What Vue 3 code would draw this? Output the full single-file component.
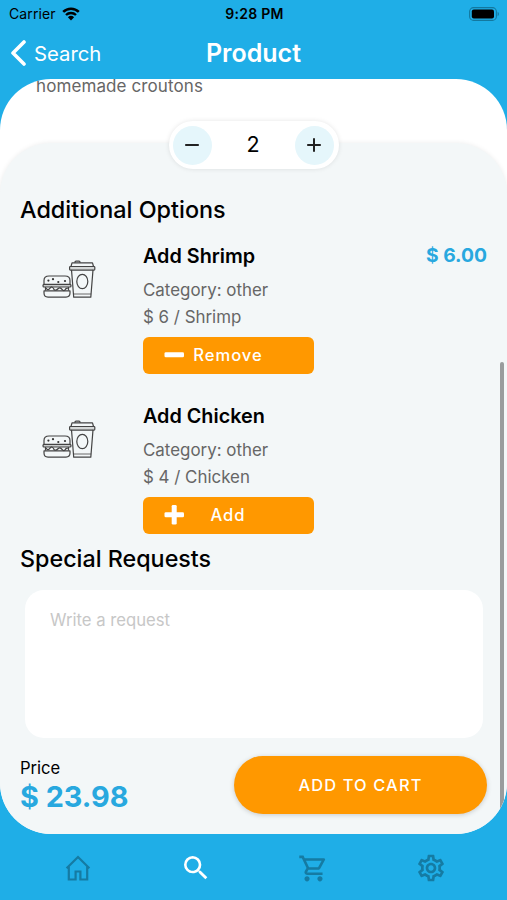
<script setup>
import { ref, computed } from "vue";

const quantity = ref(2);
const request = ref("");
const basePrice = 8.99;

const options = ref([
  { name: "Shrimp", category: "other", price: 6, selected: true },
  { name: "Chicken", category: "other", price: 4, selected: false },
]);

const total = computed(() => {
  const extras = options.value
    .filter((option) => option.selected)
    .reduce((sum, option) => sum + option.price, 0);
  return (basePrice * quantity.value + extras).toFixed(2);
});

const decrease = () => {
  if (quantity.value > 1) quantity.value--;
};

const toggle = (option) => {
  option.selected = !option.selected;
};
</script>

<template>
  <div class="screen">
    <div class="statusBar">
      <div class="carrier">
        <span>Carrier</span>
        <svg width="18" height="14" viewBox="0 0 18 14">
          <path d="M1.2 4.9a11.2 11.2 0 0 1 15.6 0" fill="none" stroke="#000" stroke-width="2.6" />
          <path d="M4 8a7.3 7.3 0 0 1 10 0" fill="none" stroke="#000" stroke-width="2.4" />
          <path d="M9 13.4 5.9 10.2a4.5 4.5 0 0 1 6.2 0z" />
        </svg>
      </div>
      <span class="time">9:28 PM</span>
      <svg class="battery" width="31" height="14" viewBox="0 0 31 14">
        <rect x="0.6" y="0.6" width="26.8" height="12.8" rx="4" fill="none" stroke="#13789f" stroke-width="1.1" />
        <rect x="2.8" y="2.6" width="22.2" height="8.8" rx="2" />
        <path d="M28.6 4.8c1.8.8 1.8 3.6 0 4.4z" fill="#13789f" />
      </svg>
    </div>

    <header class="navBar">
      <button class="backBtn">
        <svg width="16" height="26" viewBox="0 0 16 26">
          <path d="M14 2 3 13l11 11" fill="none" stroke="#fff" stroke-width="3.6" stroke-linecap="round" stroke-linejoin="round" />
        </svg>
        <span>Search</span>
      </button>
      <h1>Product</h1>
    </header>

    <main class="card">
      <p class="description">homemade croutons</p>

      <section class="panel">
        <div class="stepper">
          <button aria-label="Decrease" @click="decrease">
            <svg width="14" height="14" viewBox="0 0 14 14">
              <path d="M.2 7h13.6" stroke="#222" stroke-width="2" />
            </svg>
          </button>
          <span>{{ quantity }}</span>
          <button aria-label="Increase" @click="quantity++">
            <svg width="14" height="14" viewBox="0 0 14 14">
              <path d="M.2 7h13.6M7 .2v13.6" stroke="#222" stroke-width="2" />
            </svg>
          </button>
        </div>

        <h2>Additional Options</h2>
        <div v-for="option in options" :key="option.name" class="option">
          <svg class="thumb" width="54" height="38" viewBox="0 0 54 38">
            <g fill="none" stroke="#444" stroke-width="1.2" stroke-linejoin="round">
              <path d="M2 24v-3.5q0-4.5 5-4.5h16q5 0 5 4.5V24" />
              <rect x="1" y="24.4" width="28" height="2.6" rx="1" fill="#c9cccc" />
              <path d="M3.5 27v3.4M26.5 27v3.4" />
              <path d="M2 30.9h26v2.2q0 4-4 4H6q-4 0-4-4z" />
              <path d="M33 2.8V2q0-.9 1-.9h3q1 0 1 .9v.8" />
              <path d="M29 6.5 30 2.8h20.5l1 3.7" />
              <rect x="27.6" y="6.5" width="25.2" height="3.6" rx=".8" fill="#d5d8d8" />
              <path d="m29.5 9.9 2.2 27.3h17.1L51 9.9" />
              <path d="M31.4 34h17.7" stroke-width=".8" />
              <ellipse cx="40.3" cy="21.5" rx="5.5" ry="7.2" />
            </g>
            <path d="M4 28.2q2 3 4 0t4 1.2q2 1.6 4-.6t4 .6 4-.8l2-.6" fill="none" stroke="#444" stroke-width="1.3" />
            <g fill="#333">
              <circle cx="6.4" cy="20.6" r="1.1" />
              <circle cx="11" cy="19.2" r="1.1" />
              <circle cx="16.3" cy="22" r="1.1" />
              <circle cx="23" cy="21" r="1.1" />
            </g>
          </svg>
          <div class="details">
            <h3>Add {{ option.name }}</h3>
            <p>Category: {{ option.category }}</p>
            <p>$ {{ option.price }} / {{ option.name }}</p>
            <button class="toggleBtn" @click="toggle(option)">
              <svg width="20" height="20" viewBox="0 0 20 20" fill="#fff">
                <rect x="0.5" y="7.3" width="19.5" height="5" rx="1.3" />
                <rect v-if="!option.selected" x="7.7" y="0" width="5" height="19.5" rx="1.3" />
              </svg>
              <span>{{ option.selected ? "Remove" : "Add" }}</span>
            </button>
          </div>
          <span v-if="option.selected" class="optionPrice">$ {{ option.price.toFixed(2) }}</span>
        </div>

        <h2 class="requestTitle">Special Requests</h2>
        <textarea v-model="request" placeholder="Write a request"></textarea>

        <div class="checkout">
          <div>
            <p class="priceLabel">Price</p>
            <p class="total">$ {{ total }}</p>
          </div>
          <button class="cartBtn">ADD TO CART</button>
        </div>
      </section>
      <div class="scrollThumb"></div>
    </main>

    <nav class="tabBar">
      <button aria-label="Home">
        <svg width="28" height="28" viewBox="0 0 28 28">
          <path d="M2.6 14.2 14 3l11.4 11.2M4.8 12.3v13.2h6.8v-8h4.8v8h6.8V12.3" />
        </svg>
      </button>
      <button class="active" aria-label="Search">
        <svg width="32" height="32" viewBox="0 0 24 24">
          <path d="M15.5 14h-.79l-.28-.27A6.47 6.47 0 0 0 16 9.5 6.5 6.5 0 1 0 9.5 16c1.61 0 3.09-.59 4.23-1.57l.27.28v.79l5 4.99L20.49 19l-4.99-5zm-6 0C7.01 14 5 11.99 5 9.5S7.01 5 9.5 5 14 7.01 14 9.5 11.99 14 9.5 14z" />
        </svg>
      </button>
      <button class="filled" aria-label="Cart">
        <svg width="31" height="31" viewBox="0 0 24 24">
          <path d="M15.55 13c.75 0 1.41-.41 1.75-1.03l3.58-6.49A.996.996 0 0 0 20.01 4H5.21l-.94-2H1v2h2l3.6 7.59-1.35 2.44C4.52 15.37 5.48 17 7 17h12v-2H7l1.1-2h7.45zM6.16 6h12.15l-2.76 5H8.53L6.16 6zM7 18c-1.1 0-1.99.9-1.99 2S5.9 22 7 22s2-.9 2-2-.9-2-2-2zm10 0c-1.1 0-1.99.9-1.99 2s.89 2 1.99 2 2-.9 2-2-.9-2-2-2z" />
        </svg>
      </button>
      <button class="filled" aria-label="Settings">
        <svg width="32" height="32" viewBox="0 0 24 24">
          <path d="M19.43 12.98c.04-.32.07-.64.07-.98 0-.34-.03-.66-.07-.98l2.11-1.65c.19-.15.24-.42.12-.64l-2-3.46c-.09-.16-.26-.25-.44-.25-.06 0-.12.01-.17.03l-2.49 1c-.52-.4-1.08-.73-1.69-.98l-.38-2.65C14.46 2.18 14.25 2 14 2h-4c-.25 0-.46.18-.49.42l-.38 2.65c-.61.25-1.17.59-1.69.98l-2.49-1c-.06-.02-.12-.03-.18-.03-.17 0-.34.09-.43.25l-2 3.46c-.13.22-.07.49.12.64l2.11 1.65c-.04.32-.07.65-.07.98 0 .33.03.66.07.98l-2.11 1.65c-.19.15-.24.42-.12.64l2 3.46c.09.16.26.25.44.25.06 0 .12-.01.17-.03l2.49-1c.52.4 1.08.73 1.69.98l.38 2.65c.03.24.24.42.49.42h4c.25 0 .46-.18.49-.42l.38-2.65c.61-.25 1.17-.59 1.69-.98l2.49 1c.06.02.12.03.18.03.17 0 .34-.09.43-.25l2-3.46c.12-.22.07-.49-.12-.64l-2.11-1.65zm-1.98-1.71c.04.31.05.52.05.73 0 .21-.02.43-.05.73l-.14 1.13.89.7 1.08.84-.7 1.21-1.27-.51-1.04-.42-.9.68c-.43.32-.84.56-1.25.73l-1.06.43-.16 1.13-.2 1.35h-1.4l-.19-1.35-.16-1.13-1.06-.43c-.43-.18-.83-.41-1.23-.71l-.91-.7-1.06.43-1.27.51-.7-1.21 1.08-.84.89-.7-.14-1.13c-.03-.31-.05-.54-.05-.74s.02-.43.05-.73l.14-1.13-.89-.7-1.08-.84.7-1.21 1.27.51 1.04.42.9-.68c.43-.32.84-.56 1.25-.73l1.06-.43.16-1.13.2-1.35h1.39l.19 1.35.16 1.13 1.06.43c.43.18.83.41 1.23.71l.91.7 1.06-.43 1.27-.51.7 1.21-1.07.85-.89.7.14 1.13zM12 8c-2.21 0-4 1.79-4 4s1.79 4 4 4 4-1.79 4-4-1.79-4-4-4zm0 6c-1.1 0-2-.9-2-2s.9-2 2-2 2 .9 2 2-.9 2-2 2z" />
        </svg>
      </button>
    </nav>
  </div>
</template>

<style>
body {
  margin: 0;
}
</style>

<style scoped>
.screen {
  display: flex;
  flex-direction: column;
  width: 507px;
  height: 900px;
  background: #1faee7;
  font-family: Inter, "Liberation Sans", sans-serif;
  color: #000;
  overflow: hidden;
}

h1,
h2,
h3,
p {
  margin: 0;
}

button {
  padding: 0;
  border: none;
  background: none;
  font-family: inherit;
  cursor: pointer;
}

svg {
  display: block;
  flex: none;
}

.statusBar {
  display: grid;
  grid-template-columns: 1fr auto 1fr;
  align-items: center;
  height: 27px;
  padding: 0 7px 0 9px;
  font-size: 14px;
}

.carrier {
  display: flex;
  align-items: center;
  gap: 6px;
  letter-spacing: 0.1px;
}

.time {
  font-weight: 600;
  letter-spacing: 0.3px;
}

.battery {
  justify-self: end;
}

.navBar {
  display: grid;
  grid-template-columns: 1fr auto 1fr;
  align-items: center;
  height: 52px;
  padding: 0 10px;
  color: #fff;
}

.backBtn {
  display: flex;
  align-items: center;
  gap: 8px;
  color: #fff;
  font-size: 20.3px;
}

.navBar h1 {
  font-size: 25px;
  font-weight: 600;
}

.card {
  position: relative;
  height: 755px;
  border-radius: 51px;
  background: #fff;
  overflow: hidden;
}

.description {
  height: 64px;
  padding-left: 36px;
  font-size: 17px;
  line-height: 14px;
  letter-spacing: 0.1px;
  color: #666;
}

.panel {
  height: 691px;
  box-sizing: border-box;
  padding: 0 20px;
  border-radius: 51px 51px 0 0;
  background: #f3f7f8;
  box-shadow: 0 0 5px rgba(0, 0, 0, 0.08);
}

.stepper {
  display: flex;
  align-items: center;
  justify-content: space-between;
  width: 170px;
  height: 48px;
  box-sizing: border-box;
  margin: 0 auto;
  padding: 0 5px 0 4px;
  border-radius: 24px;
  background: #fff;
  box-shadow: 0 0 5px rgba(0, 0, 0, 0.1);
  transform: translateY(-22px);
  font-size: 21.5px;
}

.stepper span {
  margin-top: -2px;
}

.stepper button {
  display: grid;
  place-items: center;
  width: 39px;
  height: 39px;
  border-radius: 50%;
  background: #e5f6fb;
}

h2 {
  height: 30px;
  font-size: 23.4px;
  font-weight: 500;
  line-height: 30px;
}

.stepper + h2 {
  margin-top: 4px;
}

.option {
  display: flex;
  height: 160px;
}

.thumb {
  margin: 35px 47px 0 22px;
}

.details {
  width: 171px;
  padding-top: 18px;
}

.details h3 {
  margin-bottom: 7px;
  font-size: 19.8px;
  font-weight: 600;
  line-height: 27px;
}

.details p {
  font-size: 16.9px;
  line-height: 27px;
  color: #666;
}

.toggleBtn {
  display: flex;
  align-items: center;
  width: 171px;
  height: 37px;
  margin-top: 6px;
  padding: 0 0 2px 21px;
  border-radius: 6px;
  background: #ff9800;
  color: #fff;
  font-size: 16.6px;
  font-weight: 500;
  letter-spacing: 1px;
}

.toggleBtn span {
  width: 88px;
  text-align: center;
}

.optionPrice {
  margin-left: auto;
  padding-top: 17px;
  font-size: 19.3px;
  font-weight: 700;
  line-height: 27px;
  color: #28a8df;
}

.requestTitle {
  margin-top: -1px;
  font-size: 23.3px;
}

textarea {
  display: block;
  width: 458px;
  height: 148px;
  box-sizing: border-box;
  margin: 16px 0 0 5px;
  padding: 19px 25px;
  border: none;
  border-radius: 19px;
  background: #fff;
  font: 16.7px/22px Inter, "Liberation Sans", sans-serif;
  resize: none;
  outline: none;
}

textarea::placeholder {
  color: #c7c7c7;
}

.checkout {
  display: flex;
  justify-content: space-between;
  margin-top: 18px;
}

.priceLabel {
  font-size: 16.6px;
  line-height: 24px;
}

.total {
  font-size: 28.8px;
  font-weight: 700;
  line-height: 33px;
  color: #28a8df;
}

.cartBtn {
  width: 253px;
  height: 58px;
  border-radius: 29px;
  background: #ff9800;
  box-shadow: 0 1px 5px rgba(0, 0, 0, 0.18);
  color: #fff;
  font-size: 16.4px;
  font-weight: 500;
  letter-spacing: 1.15px;
}

.scrollThumb {
  position: absolute;
  top: 283px;
  right: 3px;
  width: 4px;
  height: 460px;
  border-radius: 2px;
  background: #999c9d;
}

.tabBar {
  display: grid;
  grid-template-columns: repeat(4, 117.5px);
  justify-content: center;
  height: 66px;
  padding: 2px 0 0 2px;
  box-sizing: border-box;
}

.tabBar button {
  display: grid;
  place-items: center;
}

.tabBar path {
  fill: none;
  stroke: #157ba3;
  stroke-width: 2.2;
}

.tabBar .active path {
  fill: #fff;
  stroke: none;
}

.tabBar .filled path {
  fill: #157ba3;
  stroke: none;
}
</style>
